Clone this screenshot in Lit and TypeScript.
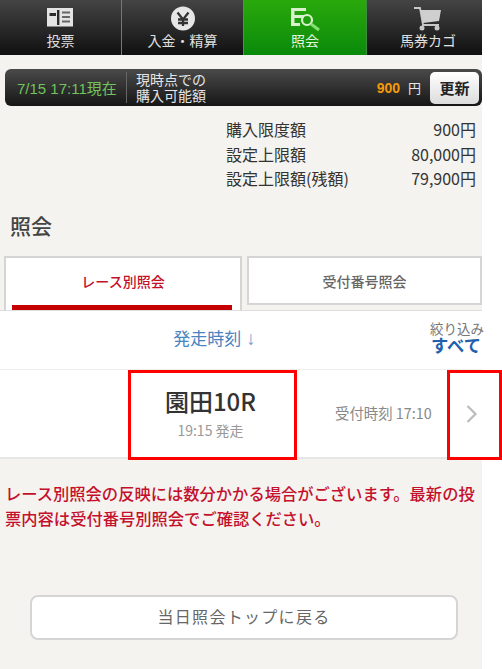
import { LitElement, html, css } from "lit";
import { customElement } from "lit/decorators.js";

@customElement("app-root")
export class AppRoot extends LitElement {
  static styles = css`
    :host { display: block; width: 502px; height: 669px; background: #fff; position: relative; overflow: hidden;
      font-family: "Noto Sans CJK JP", "Liberation Sans", sans-serif; }
    .page { width: 482px; height: 669px; background: #f4f3ef; display: flex; flex-direction: column; }
    nav { display: grid; grid-template-columns: 122px 122px 123px 115px; height: 55px; flex: none; }
    .tab { background: linear-gradient(#444, #101010); color: #e0e0e0; display: flex; flex-direction: column; align-items: center; border-right: 1px solid #777; box-sizing: border-box; font-size: 14px; line-height: 16px; padding-top: 6px; white-space: nowrap; }
    .tab:last-child { border-right: 0; padding-left: 7px; overflow: visible; }
    .tab.on { background: linear-gradient(#2aa90c, #0a8a0a); border-right: 1px solid #3c8f3c; color: #e8f5e0; }
    .tab svg { width: 30px; height: 25px; display: block; margin-bottom: 1px; flex: none; }
    .bar { margin: 14px 0 0 5px; height: 37px; width: 477px; box-sizing: border-box; border-radius: 6px; background: linear-gradient(#4a4a4a, #161616); display: flex; align-items: center; color: #e6e6e6; padding-right: 3px; flex: none; font-family: "Liberation Sans", "Noto Sans CJK JP", sans-serif; }
    .now { color: #71c45c; font-size: 15px; width: 121px; padding-left: 12px; box-sizing: border-box; white-space: nowrap; }
    .sep { width: 1px; height: 31px; background: #666; margin-right: 9px; }
    .lbl { font-size: 14px; line-height: 16px; flex: 1; }
    .amt { color: #f59a09; font-size: 14px; font-weight: 700; }
    .yen { font-size: 13px; margin: 0 9px 0 8px; }
    .upd { width: 49px; height: 32px; background: linear-gradient(#fff, #dcdcdc); border-radius: 5px; color: #222; font-size: 15px; display: flex; align-items: center; justify-content: center; font-weight: 700; }
    .limits { margin: 11px 6px 0 226px; height: 73.5px; display: grid; grid-template-columns: 1fr auto; font-size: 16px; line-height: 24.5px; color: #333; flex: none; }
    .limits .v { text-align: right; }
    h1 { margin: 20.5px 0 0 10px; font-size: 21px; line-height: 29px; font-weight: 500; color: #444; flex: none; }
    .tabs { margin: 16px 0 0 4px; display: grid; grid-template-columns: 238px 235px; gap: 5px; height: 54px; flex: none; }
    .t { background: #fff; border: 2px solid #d5d5d5; border-bottom: 0; box-sizing: border-box; font-size: 14px; line-height: 20px; font-weight: 500; color: #666; display: flex; justify-content: center; padding-top: 13px; position: relative; }
    .t.on { color: #c5102c; }
    .t.on::after { content: ""; position: absolute; left: 6px; right: 8px; bottom: 0; height: 5px; background: #c40000; }
    .t.off { height: 49px; border-bottom: 2px solid #d5d5d5; }
    .main { background: #fff; flex: none; height: 149px; border-top: 1px solid #ddd; display: flex; flex-direction: column; box-sizing: border-box; }
    .sort { height: 59px; flex: none; border-bottom: 1px solid #eee; box-sizing: border-box; display: flex; }
    .sorth { width: 429px; text-align: center; color: #4a83c0; font-size: 17px; line-height: 54px; flex: none; }
    .sorth span { margin-left: 5px; font-size: 19px; color: #6f9fd2; font-family: "Liberation Sans", sans-serif; }
    .filter { flex: 1; color: #777; font-size: 13.5px; line-height: 14px; white-space: nowrap; padding: 12px 0 0 1px; overflow: visible; min-width: 0; font-family: "Liberation Sans", "Noto Sans CJK JP", sans-serif; }
    .filter b { display: block; color: #1f62ab; font-size: 17.3px; line-height: 19px; margin-left: 1px; }
    .row { flex: 1; display: flex; border-bottom: 2px solid #e6e6e6; position: relative; }
    .race { width: 421px; text-align: center; padding-top: 15px; }
    .name { font-size: 24px; font-weight: 500; color: #333; line-height: 32px; }
    .time { font-size: 14px; color: #999; line-height: 17px; margin-top: 4.5px; }
    .recv { position: absolute; left: 335px; top: 34px; font-size: 14.4px; color: #888; line-height: 17px; }
    .chev { position: absolute; left: 466px; top: 35px; width: 12px; height: 18px; }
    .note { margin: 21.5px 0 0 5px; width: 476px; color: #c5102c; font-size: 16.3px; font-weight: 500; line-height: 25px; flex: none; }
    .back { margin: 64.5px 0 0 30px; width: 428px; height: 45px; box-sizing: border-box; background: #fff; border: 2px solid #d5d5d5; border-radius: 8px; display: flex; align-items: center; justify-content: center; color: #666; font-size: 16px; letter-spacing: 1.3px; padding-bottom: 3px; flex: none; }
    .mark { position: absolute; border: 3px solid #f00; box-sizing: border-box; pointer-events: none; }
    .m1 { left: 128px; top: 370px; width: 169px; height: 90px; }
    .m2 { left: 447px; top: 370px; width: 55px; height: 90px; }
  `;

  render() {
    return html`
      <div class="page">
        <nav>
          <div class="tab"><svg viewBox="0 0 30 25">
            <rect x="1" y="2" width="26" height="18.5" fill="#e4e4e4"/>
            <rect x="11" y="4" width="2.4" height="15" fill="#2b2b2b"/>
            <rect x="3.5" y="7" width="6.5" height="3" fill="#2b2b2b"/>
            <path d="M16 6.5h8M16 11h8M16 15.5h8" stroke="#666" stroke-width="2"/>
          </svg>投票</div>
          <div class="tab"><svg viewBox="0 0 30 25">
            <circle cx="15" cy="12.5" r="12" fill="#e6e6e6"/>
            <path d="M9.5 6.5l5.5 7 5.5-7M15 13v7M10 13.5h10M10 17h10" fill="none" stroke="#333" stroke-width="2.3"/>
          </svg>入金・精算</div>
          <div class="tab on"><svg viewBox="0 0 30 25">
            <path d="M1 2h15v3H4.5v4H14v3H4.5v5H10v3H1z" fill="#d8f0cc"/>
            <circle cx="17" cy="14" r="5" fill="none" stroke="#d8f0cc" stroke-width="2.2"/>
            <path d="M21 18l8 6" stroke="#86e070" stroke-width="3"/>
          </svg>照会</div>
          <div class="tab"><svg viewBox="0 0 30 25">
            <path d="M1 2h6l3 17h16" fill="none" stroke="#c8c8c8" stroke-width="1.8"/>
            <path d="M7.5 4H28l-2 11-16 2z" fill="#cfcfcf"/>
            <circle cx="9" cy="22" r="2.5" fill="#c8c8c8"/><circle cx="24" cy="22" r="2.5" fill="#c8c8c8"/>
          </svg>馬券カゴ</div>
        </nav>
        <div class="bar">
          <div class="now">7/15 17:11現在</div><div class="sep"></div>
          <div class="lbl">現時点での<br>購入可能額</div>
          <span class="amt">900</span><span class="yen">円</span>
          <div class="upd">更新</div>
        </div>
        <div class="limits">
          <div>購入限度額</div><div class="v">900円</div>
          <div>設定上限額</div><div class="v">80,000円</div>
          <div>設定上限額(残額)</div><div class="v">79,900円</div>
        </div>
        <h1>照会</h1>
        <div class="tabs"><div class="t on">レース別照会</div><div class="t off">受付番号照会</div></div>
        <div class="main">
          <div class="sort"><div class="sorth">発走時刻<span>↓</span></div><div class="filter">絞り込み<b>すべて</b></div></div>
          <div class="row">
            <div class="race"><div class="name">園田10R</div><div class="time">19:15 発走</div></div>
            <div class="recv">受付時刻 17:10</div>
            <svg class="chev" viewBox="0 0 12 18"><path d="M1.5 1l8 8-8 8" fill="none" stroke="#bbb" stroke-width="2.2"/></svg>
          </div>
        </div>
        <div class="note">レース別照会の反映には数分かかる場合がございます。最新の投票内容は受付番号別照会でご確認ください。</div>
        <div class="back">当日照会トップに戻る</div>
      </div>
      <div class="mark m1"></div>
      <div class="mark m2"></div>
    `;
  }
}
